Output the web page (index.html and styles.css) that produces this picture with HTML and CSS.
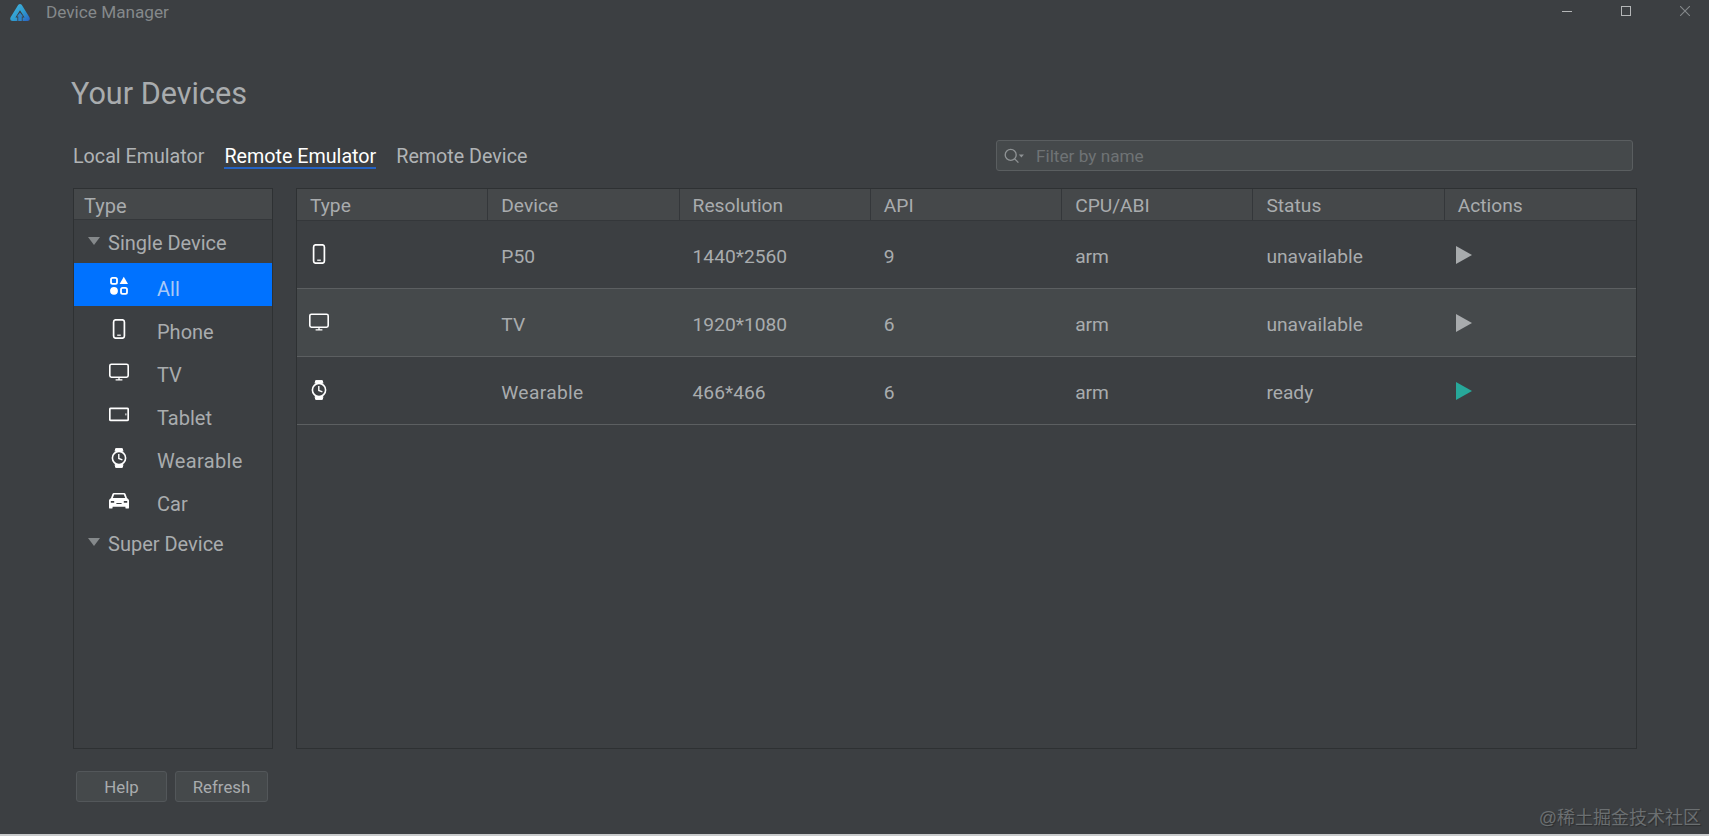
FILE: index.html
```html
<!DOCTYPE html>
<html lang="en">
<head>
<meta charset="utf-8">
<title>Device Manager</title>
<link rel="stylesheet" href="styles.css">
</head>
<body>
<div class="app">
  <header class="titlebar">
    <div class="brand">
      <svg class="logo" viewBox="0 0 20 17" width="20" height="17">
        <defs><linearGradient id="lg" x1="0" y1="0" x2="1" y2="1"><stop offset="0" stop-color="#46b6e0"/><stop offset=".55" stop-color="#2f9ccf"/><stop offset="1" stop-color="#2a62c4"/></linearGradient></defs>
        <path fill="url(#lg)" fill-rule="evenodd" d="M8.3 .7Q10 -.6 11.7 .7L19.4 13.2Q20.8 16.8 17.4 17H12.6V13.4H14.6L10 6.2L5.4 13.4H7.4V17H2.6Q-.8 16.8 .6 13.2Z"/>
        <path fill="#2f86c8" d="M10 8.6L13.2 12.4H11.8V17H8.2V12.4H6.8Z"/>
      </svg>
      <span class="app-name">Device Manager</span>
    </div>
    <div class="win-controls">
      <svg viewBox="0 0 10 10" width="10" height="10"><path d="M0 5.5H10" stroke="#b4b6b7" stroke-width="1"/></svg>
      <svg viewBox="0 0 10 10" width="10" height="10"><rect x=".5" y=".5" width="9" height="9" fill="none" stroke="#b4b6b7"/></svg>
      <svg viewBox="0 0 10 10" width="10" height="10"><path d="M0 0L10 10M10 0L0 10" stroke="#84888a" stroke-width="1.1"/></svg>
    </div>
  </header>

  <main class="content">
    <h1 class="heading">Your Devices</h1>

    <div class="toolbar">
      <nav class="tabs">
        <span class="tab">Local Emulator</span>
        <span class="tab active">Remote Emulator</span>
        <span class="tab">Remote Device</span>
      </nav>
      <div class="filter">
        <svg class="filter-icon" viewBox="0 0 20 16" width="22" height="18"><circle cx="7" cy="7" r="5" fill="none" stroke="#8f9395" stroke-width="1.2"/><path d="M10.6 10.6L14 14" stroke="#8f9395" stroke-width="1.2"/><path d="M14.4 6.6H19L16.7 9.4Z" fill="#8f9395"/></svg>
        <span class="placeholder">Filter by name</span>
      </div>
    </div>

    <div class="panels">
      <aside class="sidebar">
        <div class="side-head">Type</div>
        <div class="group"><i class="caret"></i>Single Device</div>
        <div class="item selected">
          <svg class="icon" viewBox="0 0 20 20" width="20" height="20"><rect x="2" y="1.8" width="6" height="6" rx="1.6" fill="none" stroke="#fff" stroke-width="1.8"/><path d="M14.8 .8L19 8H10.6Z" fill="#fff"/><circle cx="5" cy="14.8" r="3.9" fill="#fff"/><rect x="12" y="11.8" width="6" height="6" rx="1.6" fill="none" stroke="#fff" stroke-width="1.8"/></svg>
          <span>All</span>
        </div>
        <div class="item">
          <svg class="icon" viewBox="0 0 20 20" width="20" height="20"><rect x="4.6" y=".8" width="10.8" height="18.4" rx="2.2" fill="none" stroke="#fff" stroke-width="1.7"/><path d="M8.2 16.2H11.8" stroke="#fff" stroke-width="1.2"/></svg>
          <span>Phone</span>
        </div>
        <div class="item">
          <svg class="icon" viewBox="0 0 20 20" width="20" height="20"><rect x=".8" y="2.2" width="18.4" height="13" rx="1.6" fill="none" stroke="#fff" stroke-width="1.6"/><path d="M10 15.4V17.4M6.6 17.8H13.4" stroke="#fff" stroke-width="1.3"/></svg>
          <span>TV</span>
        </div>
        <div class="item">
          <svg class="icon" viewBox="0 0 20 20" width="20" height="20"><rect x=".8" y="3.4" width="18.4" height="12" rx="1" fill="none" stroke="#fff" stroke-width="1.7"/><path d="M16.9 8.4V10.4" stroke="#fff" stroke-width="1"/></svg>
          <span>Tablet</span>
        </div>
        <div class="item">
          <svg class="icon" viewBox="0 0 20 20" width="20" height="20"><path d="M6 3.4L6.8 .4H13.2L14 3.4M6 16.6L6.8 19.6H13.2L14 16.6Z" fill="#fff" stroke="#fff"/><circle cx="10" cy="10" r="6.6" fill="none" stroke="#fff" stroke-width="1.6"/><path d="M9.8 6V10.4L13.4 11.8" fill="none" stroke="#fff" stroke-width="1.4"/></svg>
          <span class="wide">Wearable</span>
        </div>
        <div class="item">
          <svg class="icon" viewBox="0 0 20 20" width="20" height="20"><path fill-rule="evenodd" fill="#fff" d="M5 2H15Q16.2 2 16.7 3.2L18 7L19.4 8.2Q20 8.8 20 9.6V16.4Q20 17.6 19 17.6H17.4Q16.4 17.6 16.4 16.4V15.8H3.6V16.4Q3.6 17.6 2.6 17.6H1Q0 17.6 0 16.4V9.6Q0 8.8 .6 8.2L2 7L3.3 3.2Q3.8 2 5 2ZM5.2 3.6L3.8 6.9H16.2L14.8 3.6ZM1.8 10V11.8H5.2V10ZM14.8 10V11.8H18.2V10ZM7.4 12V13H12.6V12Z"/></svg>
          <span>Car</span>
        </div>
        <div class="group"><i class="caret"></i>Super Device</div>
      </aside>

      <section class="table">
        <div class="row head">
          <div class="cell">Type</div><div class="cell">Device</div><div class="cell">Resolution</div><div class="cell">API</div><div class="cell">CPU/ABI</div><div class="cell">Status</div><div class="cell">Actions</div>
        </div>
        <div class="row body-row">
          <div class="cell"><svg class="icon" viewBox="0 0 20 20" width="20" height="20"><rect x="4.6" y=".8" width="10.8" height="18.4" rx="2.2" fill="none" stroke="#fff" stroke-width="1.7"/><path d="M8.2 16.2H11.8" stroke="#fff" stroke-width="1.2"/></svg></div>
          <div class="cell">P50</div><div class="cell">1440*2560</div><div class="cell">9</div><div class="cell">arm</div><div class="cell">unavailable</div>
          <div class="cell"><svg class="play" viewBox="0 0 16 18" width="16" height="18"><path d="M0 0L16 9L0 18Z" fill="#a8abad"/></svg></div>
        </div>
        <div class="row body-row hover">
          <div class="cell"><svg class="icon" viewBox="0 0 20 20" width="20" height="20"><rect x=".8" y="2.2" width="18.4" height="13" rx="1.6" fill="none" stroke="#fff" stroke-width="1.6"/><path d="M10 15.4V17.4M6.6 17.8H13.4" stroke="#fff" stroke-width="1.3"/></svg></div>
          <div class="cell">TV</div><div class="cell">1920*1080</div><div class="cell">6</div><div class="cell">arm</div><div class="cell">unavailable</div>
          <div class="cell"><svg class="play" viewBox="0 0 16 18" width="16" height="18"><path d="M0 0L16 9L0 18Z" fill="#a8abad"/></svg></div>
        </div>
        <div class="row body-row">
          <div class="cell"><svg class="icon" viewBox="0 0 20 20" width="20" height="20"><path d="M6 3.4L6.8 .4H13.2L14 3.4M6 16.6L6.8 19.6H13.2L14 16.6Z" fill="#fff" stroke="#fff"/><circle cx="10" cy="10" r="6.6" fill="none" stroke="#fff" stroke-width="1.6"/><path d="M9.8 6V10.4L13.4 11.8" fill="none" stroke="#fff" stroke-width="1.4"/></svg></div>
          <div class="cell wide">Wearable</div><div class="cell">466*466</div><div class="cell">6</div><div class="cell">arm</div><div class="cell">ready</div>
          <div class="cell"><svg class="play" viewBox="0 0 16 18" width="16" height="18"><path d="M0 0L16 9L0 18Z" fill="#27a89a"/></svg></div>
        </div>
      </section>
    </div>

    <div class="actions">
      <button class="btn btn-help">Help</button>
      <button class="btn btn-refresh">Refresh</button>
    </div>
  </main>
  <div class="watermark">@稀土掘金技术社区</div>
</div>
</body>
</html>
```
FILE: styles.css
```css
* { box-sizing: border-box; }
html, body { margin: 0; padding: 0; background: #3c3f41; }
body { overflow: hidden; }

.app {
  position: relative;
  width: 1709px;
  height: 836px;
  display: flex;
  flex-direction: column;
  background: #3c3f42;
  border-bottom: 2px solid #c9cbcc;
  color: #a9acae;
  font-family: Roboto, "Liberation Sans", sans-serif;
  font-size: 20px;
  overflow: hidden;
}

.titlebar {
  height: 24px;
  flex: none;
  display: flex;
  align-items: center;
  justify-content: space-between;
}
.brand { display: flex; align-items: center; padding-left: 10px; }
.logo { display: block; margin-right: 16px; }
.app-name { font-size: 17.2px; color: #85898b; }
.win-controls {
  display: flex;
  gap: 49px;
  padding-right: 19px;
  margin-top: -2px;
}
.win-controls svg { display: block; }

.content {
  flex: 1;
  display: flex;
  flex-direction: column;
  padding: 0 72px 0 73px;
}

.heading {
  margin: 52px 0 0 -2px;
  height: 36px;
  line-height: 36px;
  font-size: 30.6px;
  font-weight: 400;
  color: #a9acae;
}

.toolbar {
  display: flex;
  justify-content: space-between;
  align-items: flex-start;
  margin-top: 28px;
  padding-right: 4px;
  height: 48px;
}
.tabs { display: flex; gap: 20px; padding-top: 4px; font-size: 19.7px; }
.tab {
  height: 25px;
  line-height: 26px;
  color: #b0b3b5;
}
.tab.active {
  color: #fff;
  border-bottom: 2px solid #2563c4;
}
.filter {
  width: 637px;
  height: 31px;
  display: flex;
  align-items: center;
  padding: 1px 0 0 6px;
  background: #45494b;
  border: 1px solid #5a5e60;
  border-radius: 3px;
}
.filter-icon { display: block; margin-right: 11px; flex: none; }
.placeholder { font-size: 17.2px; color: #6f7375; }

.panels {
  display: flex;
  gap: 23px;
  height: 561px;
  flex: none;
}

.sidebar {
  width: 200px;
  flex: none;
  border: 1px solid #2e3133;
}
.side-head {
  height: 31px;
  line-height: 34px;
  padding-left: 10px;
  background: #45484a;
  border-bottom: 1px solid #34373a;
}
.group {
  height: 43px;
  line-height: 46px;
  padding-left: 34px;
  position: relative;
}
.caret {
  position: absolute;
  left: 14px;
  top: 17px;
  width: 0;
  height: 0;
  border-left: 6px solid transparent;
  border-right: 6px solid transparent;
  border-top: 8px solid #85898b;
}

.item {
  height: 43px;
  display: flex;
  align-items: center;
  padding: 6px 0 0 35px;
}
.item .icon { display: block; margin: 0 28px 4px 0; flex: none; }
.item span { margin-top: 2px; }
.item.selected { background: #0072ff; color: #a8c9f7; }
.wide { letter-spacing: .35px; }

.table {
  flex: 1;
  border: 1px solid #2e3133;
  font-size: 19.2px;
}
.row {
  display: grid;
  grid-template-columns: repeat(7, 1fr);
}
.cell {
  display: flex;
  align-items: center;
  padding-left: 13px;
  min-width: 0;
}
.head {
  height: 32px;
  background: #45484a;
  border-bottom: 1px solid #34373a;
}
.head .cell { border-right: 1px solid #34373a; padding-top: 2px; }
.head .cell:last-child { border-right: 0; }
.body-row {
  height: 68px;
  border-bottom: 1px solid #5c5f61;
}
.body-row.hover { background: #45494b; }
.body-row .cell { padding-top: 4px; }
.body-row .cell:first-child { padding: 0 0 0 12px; }
.body-row .cell:last-child { padding-top: 0; }
.body-row .icon { display: block; margin-bottom: 2px; }
.body-row .play { display: block; margin: 0 0 0 -2px; }

.actions {
  display: flex;
  gap: 8px;
  margin-top: 22px;
  padding-left: 3px;
}
.btn {
  height: 31px;
  padding: 0;
  background: #45494b;
  border: 1px solid #53575a;
  border-radius: 3px;
  color: #a9acae;
  font: inherit;
  font-size: 16.8px;
}
.btn-help { width: 91px; }
.btn-refresh { width: 93px; }

.watermark {
  position: absolute;
  right: 8px;
  bottom: 5px;
  font-family: "Liberation Sans", "Noto Sans CJK SC", sans-serif;
  font-size: 18px;
  color: #6b6f71;
  text-shadow: 1px 1px 1px #2b2d2f;
}
```
